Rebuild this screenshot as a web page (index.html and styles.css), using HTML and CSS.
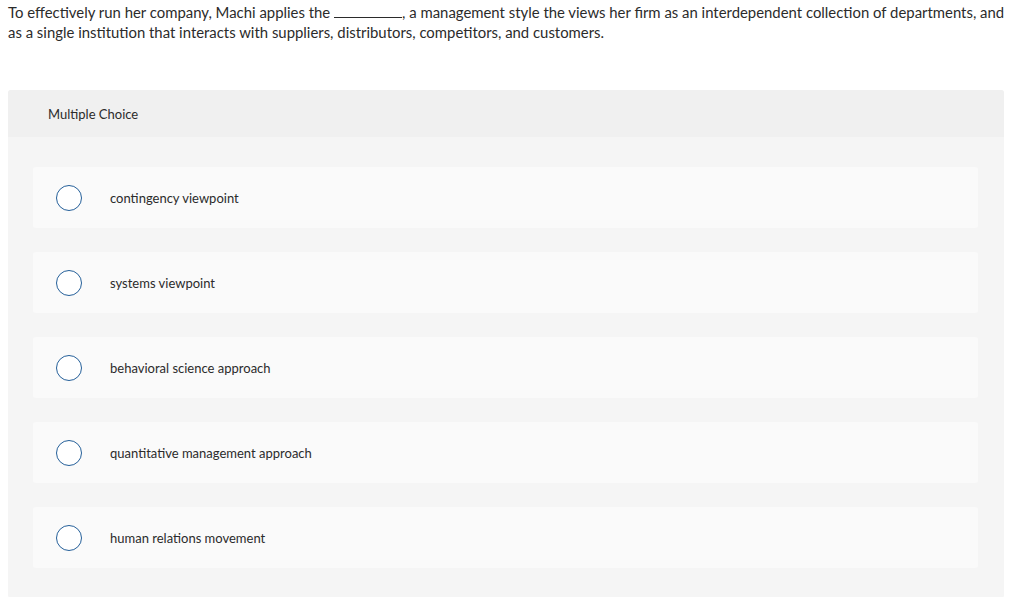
FILE: index.html
```html
<!DOCTYPE html>
<html>
<head>
<meta charset="utf-8">
<link rel="stylesheet" href="styles.css">
</head>
<body>
<div class="question">To effectively run her company, Machi applies the <span class="blank"></span>, a management style the views her firm as an interdependent collection of departments, and as a single institution that interacts with suppliers, distributors, competitors, and customers.</div>
<div class="panel">
  <div class="panel-head">Multiple Choice</div>
  <div class="panel-body">
    <div class="option"><span class="radio"></span><span class="label">contingency viewpoint</span></div>
    <div class="option"><span class="radio"></span><span class="label">systems viewpoint</span></div>
    <div class="option"><span class="radio"></span><span class="label">behavioral science approach</span></div>
    <div class="option"><span class="radio"></span><span class="label">quantitative management approach</span></div>
    <div class="option"><span class="radio"></span><span class="label">human relations movement</span></div>
  </div>
</div>
</body>
</html>
```
FILE: styles.css
```css
html, body { margin: 0; padding: 0; background: #fff; }
body {
  padding: 2px 8px 0 8px;
  font-family: Lato, "Liberation Sans", sans-serif;
  color: #2b2b2b;
  overflow: hidden;
}
.question {
  font-size: 14.9px;
  line-height: 20px;
  width: 1000px;
}
.blank {
  display: inline-block;
  width: 68px;
  height: 14px;
  border-bottom: 1px solid #2b2b2b;
  vertical-align: baseline;
}
.panel {
  margin-top: 48px;
  width: 996px;
  background: #f5f5f5;
  border-radius: 3px;
}
.panel-head {
  background: #f0f0f0;
  height: 47px;
  display: flex;
  align-items: center;
  padding-left: 40px;
  font-size: 13px;
  border-radius: 3px 3px 0 0;
}
.panel-body {
  padding: 30px 26px 30px 25px;
  display: flex;
  flex-direction: column;
  gap: 24px;
}
.option {
  height: 61px;
  background: #fafafa;
  border-radius: 3px;
  display: flex;
  align-items: center;
  padding-left: 23px;
}
.radio {
  width: 24px;
  height: 24px;
  border: 1.3px solid #245f99;
  border-radius: 50%;
  background: #fff;
  flex: none;
}
.label {
  margin-left: 28px;
  font-size: 13px;
}
```
